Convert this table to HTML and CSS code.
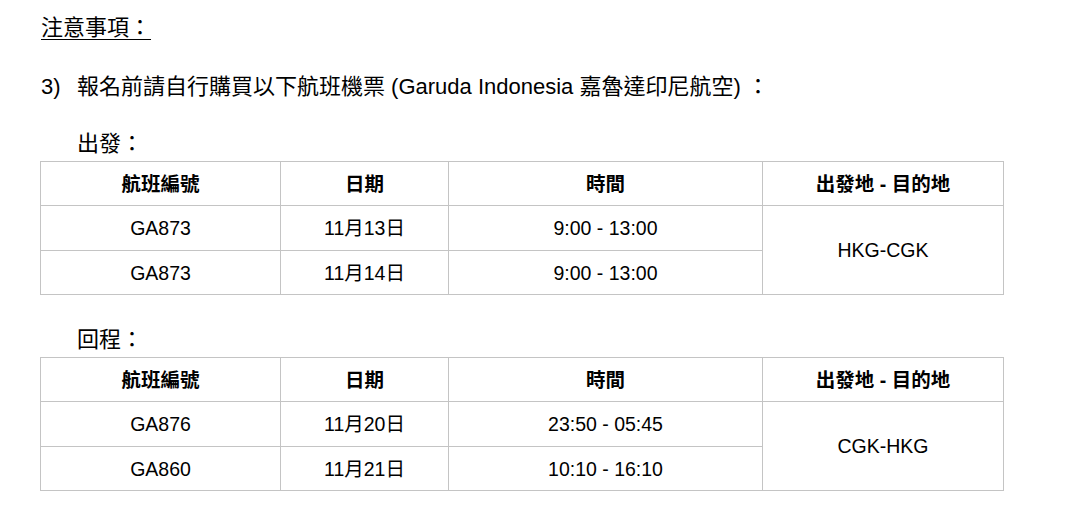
FILE: index.html
```html
<!DOCTYPE html>
<html lang="zh-Hant">
<head>
<meta charset="utf-8">
<title>注意事項</title>
<link rel="stylesheet" href="styles.css">
</head>
<body>
<div class="page">
  <h2 class="notice">注意事項：</h2>
  <p class="intro"><span class="num">3)</span><span>報名前請自行購買以下航班機票 (Garuda Indonesia 嘉魯達印尼航空) ：</span></p>

  <h3 class="leg">出發：</h3>
  <table class="flights">
    <colgroup><col class="c1"><col class="c2"><col class="c3"><col class="c4"></colgroup>
    <thead>
      <tr><th>航班編號</th><th>日期</th><th>時間</th><th>出發地 - 目的地</th></tr>
    </thead>
    <tbody>
      <tr class="r1"><td>GA873</td><td>11月13日</td><td>9:00 - 13:00</td><td rowspan="2">HKG-CGK</td></tr>
      <tr class="r2"><td>GA873</td><td>11月14日</td><td>9:00 - 13:00</td></tr>
    </tbody>
  </table>

  <h3 class="leg leg-return">回程：</h3>
  <table class="flights">
    <colgroup><col class="c1"><col class="c2"><col class="c3"><col class="c4"></colgroup>
    <thead>
      <tr><th>航班編號</th><th>日期</th><th>時間</th><th>出發地 - 目的地</th></tr>
    </thead>
    <tbody>
      <tr class="r1"><td>GA876</td><td>11月20日</td><td>23:50 - 05:45</td><td rowspan="2">CGK-HKG</td></tr>
      <tr class="r2"><td>GA860</td><td>11月21日</td><td>10:10 - 16:10</td></tr>
    </tbody>
  </table>
</div>
</body>
</html>
```
FILE: styles.css
```css
html, body {
  margin: 0;
  padding: 0;
  background: #fff;
}
body {
  font-family: "Liberation Sans", "Noto Sans CJK TC", sans-serif;
  color: #000;
}
.page {
  padding: 13px 0 0 40px;
}
.notice {
  margin: 0 0 0 1px;
  font-size: 22px;
  line-height: 30px;
  font-weight: 400;
  text-decoration: underline;
  text-decoration-thickness: 1px;
  text-underline-offset: 4px;
  display: inline-block;
}
.intro {
  margin: 29px 0 0 1px;
  font-size: 22px;
  line-height: 30px;
  display: flex;
}
.num {
  width: 36px;
  flex: none;
}
.leg {
  margin: 27px 0 2px 37px;
  font-size: 22px;
  line-height: 30px;
  font-weight: 400;
}
.leg-return {
  margin-top: 30px;
}
.flights {
  border-collapse: collapse;
  table-layout: fixed;
  width: 964px;
  font-size: 19.5px;
}
.c1 { width: 240px; }
.c2 { width: 168px; }
.c3 { width: 314px; }
.c4 { width: 241px; }
.flights th,
.flights td {
  border: 1px solid #c4c4c4;
  text-align: center;
  vertical-align: middle;
  padding: 0;
  line-height: 22px;
}
.flights th {
  font-weight: 700;
  height: 43px;
}
.flights .r1 td {
  height: 44px;
}
.flights .r2 td {
  height: 43px;
}
```
